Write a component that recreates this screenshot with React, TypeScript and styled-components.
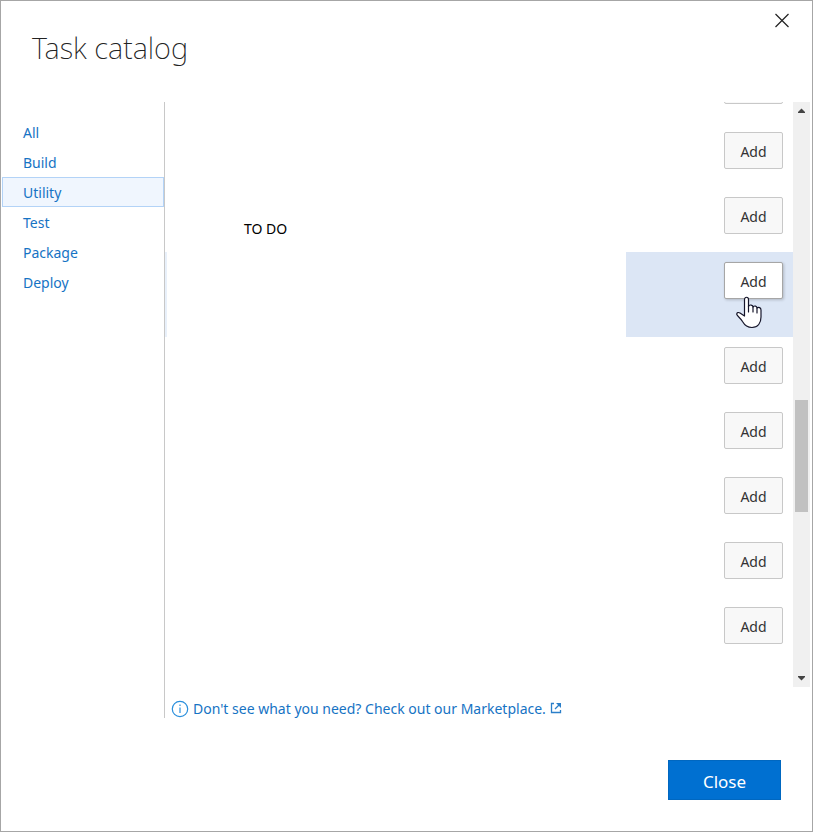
import React from "react";
import styled, { createGlobalStyle, css } from "styled-components";

const GlobalStyle = createGlobalStyle`
  *, *::before, *::after { box-sizing: border-box; }
  html, body, #root { height: 100%; }
  body {
    margin: 0;
    background: #fff;
    font-family: "Noto Sans", "Open Sans", sans-serif;
    font-size: 14px;
    line-height: 20px;
    color: #222;
  }
  button, a { font: inherit; }
`;

const Dialog = styled.section`
  display: flex;
  flex-direction: column;
  min-height: 100%;
  border: 1px solid #a6a6a6;
  background: #fff;
`;

const Header = styled.header`
  display: flex;
  justify-content: space-between;
  align-items: flex-start;
  height: 101px;
  padding: 10px 20px 0 31px;
`;

const Title = styled.h1`
  margin: 17px 0 0;
  font-size: 29px;
  line-height: 40px;
  font-weight: 200;
`;

const IconButton = styled.button`
  display: flex;
  padding: 2px;
  border: 0;
  background: none;
  color: #222;
  cursor: pointer;
`;

const Body = styled.div`
  display: grid;
  grid-template-columns: 164px minmax(0, 1fr);
`;

const Nav = styled.nav`
  display: flex;
  flex-direction: column;
  padding: 15px 0 0 1px;
  border-right: 1px solid #c8c8c8;
`;

const NavLink = styled.a<{ $active?: boolean }>`
  height: 30px;
  padding: 5px 20px 3px;
  border: 1px solid transparent;
  color: #1673c4;
  text-decoration: none;
  ${({ $active }) =>
    $active &&
    css`
      border-color: #b3d3f7;
      background: #f0f6fe;
    `}
`;

const Content = styled.div`
  display: flex;
  flex-direction: column;
  min-width: 0;
`;

const Scroller = styled.div`
  display: flex;
  height: 585px;
  padding-right: 2px;
`;

const TaskList = styled.ul`
  flex: 1;
  min-width: 0;
  margin: 0;
  padding: 0;
  list-style: none;
  overflow: hidden;
`;

const Task = styled.li<{ $selected?: boolean; $clipped?: boolean }>`
  display: flex;
  height: ${({ $selected, $clipped }) => ($selected ? 85 : $clipped ? 20 : 65)}px;
  align-items: ${({ $clipped }) => ($clipped ? "flex-end" : "stretch")};
  padding-left: 2px;
  overflow: hidden;
  background: ${({ $selected }) =>
    $selected ? "linear-gradient(90deg, #e8f0fa 2px, #dce6f5 2px)" : "#fff"};
`;

const TaskText = styled.div`
  flex: 1;
  min-width: 0;
  padding: 32px 77px 0;
  background: #fff;
  color: #000;
`;

const TaskAction = styled.div`
  position: relative;
  flex: none;
  display: flex;
  justify-content: flex-end;
  width: 167px;
  padding: 10px 10px 18px;
`;

const AddButton = styled.button<{ $hover?: boolean }>`
  width: 59px;
  height: 37px;
  padding: 2px 0 0;
  border: 1px solid ${({ $hover }) => ($hover ? "#a6a6a6" : "#c8c8c8")};
  border-radius: 2px;
  background: ${({ $hover }) => ($hover ? "#fff" : "#f8f8f8")};
  box-shadow: ${({ $hover }) => ($hover ? "1px 1px 3px rgba(0, 0, 0, 0.2)" : "none")};
  color: #333;
  cursor: pointer;
`;

const Pointer = styled.svg`
  position: absolute;
  right: 30px;
  top: 44px;
  pointer-events: none;
`;

const ScrollTrack = styled.div`
  display: flex;
  flex-direction: column;
  align-items: center;
  width: 17px;
  background: #f0f0f0;
`;

const ScrollGap = styled.div<{ $grow: number }>`
  flex: ${({ $grow }) => $grow};
`;

const ScrollThumb = styled.div`
  width: 13px;
  height: 112px;
  background: #c1c1c1;
`;

const ScrollArrow = styled.svg`
  flex: none;
  width: 17px;
  height: 17px;
  fill: #444;
`;

const MarketLink = styled.a`
  display: flex;
  align-items: center;
  align-self: flex-start;
  height: 19px;
  margin: 12px 0 0 6px;
  color: #1673c4;
  text-decoration: none;
  white-space: nowrap;
`;

const InfoIcon = styled.svg`
  margin-right: 4px;
`;

const ExternalIcon = styled.svg`
  margin: 0 0 2px 4px;
`;

const Footer = styled.footer`
  display: flex;
  justify-content: flex-end;
  padding: 42px 31px 31px;
`;

const CloseButton = styled.button`
  width: 113px;
  height: 40px;
  padding: 3px 0 0;
  border: 1px solid #0067c0;
  background: #0070d1;
  color: #fff;
  font-size: 17px;
  cursor: pointer;
`;

const categories = ["All", "Build", "Utility", "Test", "Package", "Deploy"];

const tasks = [
  { id: 1, clipped: true },
  { id: 2 },
  { id: 3, text: "TO DO" },
  { id: 4, selected: true },
  { id: 5 },
  { id: 6 },
  { id: 7 },
  { id: 8 },
  { id: 9 },
];

const HandPointer = () => (
  <Pointer width="27" height="33" viewBox="0 0 27 33" aria-hidden="true">
    <path
      d="M8.500 20V3.500C8.500 .5 12.500 .5 12.500 3.500V10.500C13.500 8 17 9 17 11C18.500 9.200 21 10 21 12C22.500 10.800 25 11.500 25 14V21C25 27 22 31.500 16 31.500C11 31.500 8.500 29 6.500 25.500C5 22.500 1.500 20.500 .8 18.500C.5 16.500 2.500 16 4 17Z"
      fill="#fff"
      stroke="#15152a"
      strokeWidth="1.200"
      strokeLinejoin="round"
    />
    <path d="M12.500 10V16M17 11V16M21 12V17" fill="none" stroke="#15152a" strokeWidth="1.200" strokeLinecap="round" />
  </Pointer>
);

export default function App() {
  return (
    <>
      <GlobalStyle />
      <Dialog role="dialog" aria-labelledby="catalog-title">
        <Header>
          <Title id="catalog-title">Task catalog</Title>
          <IconButton type="button" aria-label="Close dialog">
            <svg width="16" height="16" viewBox="0 0 16 16" aria-hidden="true">
              <path d="M1.500 1L14.500 14M14.500 1L1.500 14" stroke="currentColor" strokeWidth="1.200" />
            </svg>
          </IconButton>
        </Header>
        <Body>
          <Nav aria-label="Task categories">
            {categories.map((name) => (
              <NavLink
                key={name}
                href={`#${name.toLowerCase()}`}
                $active={name === "Utility"}
                aria-current={name === "Utility" ? "page" : undefined}
              >
                {name}
              </NavLink>
            ))}
          </Nav>
          <Content>
            <Scroller>
              <TaskList>
                {tasks.map((task) => (
                  <Task key={task.id} $selected={task.selected} $clipped={task.clipped}>
                    <TaskText>{task.text}</TaskText>
                    <TaskAction>
                      <AddButton type="button" $hover={task.selected} aria-label="Add">
                        {task.clipped ? null : "Add"}
                      </AddButton>
                      {task.selected && <HandPointer />}
                    </TaskAction>
                  </Task>
                ))}
              </TaskList>
              <ScrollTrack aria-hidden="true">
                <ScrollArrow viewBox="0 0 17 17">
                  <path d="M5 11V10L8.500 6.500L12 10V11Z" />
                </ScrollArrow>
                <ScrollGap $grow={281} />
                <ScrollThumb />
                <ScrollGap $grow={158} />
                <ScrollArrow viewBox="0 0 17 17">
                  <path d="M5 6V7L8.500 10.500L12 7V6Z" />
                </ScrollArrow>
              </ScrollTrack>
            </Scroller>
            <MarketLink href="#marketplace">
              <InfoIcon width="18" height="18" viewBox="0 0 18 18" aria-hidden="true">
                <circle cx="9" cy="9" r="7.700" fill="none" stroke="#2b8fdc" strokeWidth="1.200" />
                <path d="M9 4.500V6M9 7.500V13" stroke="#2b8fdc" strokeWidth="1.200" />
              </InfoIcon>
              Don't see what you need? Check out our Marketplace.
              <ExternalIcon width="12" height="12" viewBox="0 0 12 12" aria-hidden="true">
                <path
                  d="M4 1.500H1.500V10.500H10.500V8M9.500 2.500L5 7"
                  fill="none"
                  stroke="#2b7fc9"
                  strokeWidth="1.300"
                />
                <path d="M6 1H11V6L9.500 4.500L7.500 2.500Z" fill="#2b7fc9" />
              </ExternalIcon>
            </MarketLink>
          </Content>
        </Body>
        <Footer>
          <CloseButton type="button">Close</CloseButton>
        </Footer>
      </Dialog>
    </>
  );
}
